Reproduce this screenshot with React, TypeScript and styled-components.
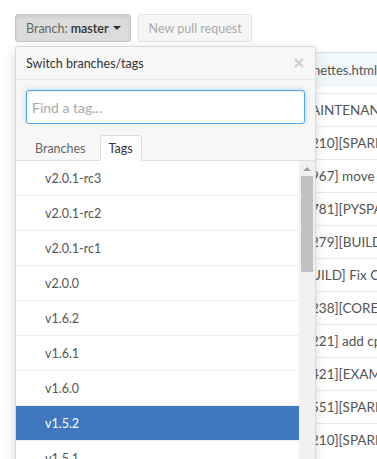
import React from "react";
import styled, { createGlobalStyle } from "styled-components";

const GlobalStyle = createGlobalStyle`
  html, body {
    margin: 0;
    overflow: hidden;
    background: #fff;
  }
  body {
    font-family: Lato, "Open Sans", sans-serif;
    color: #333;
  }
`;

const tags = [
  "v2.0.1-rc3",
  "v2.0.1-rc2",
  "v2.0.1-rc1",
  "v2.0.0",
  "v1.6.2",
  "v1.6.1",
  "v1.6.0",
  "v1.5.2",
  "v1.5.1",
  "v1.5.0",
];

const commits = [
  "AINTENAN",
  "210][SPARK",
  "967] move",
  "781][PYSPA",
  "279][BUILD",
  "UILD] Fix C",
  "238][CORE]",
  "221] add cp",
  "421][EXAM",
  "551][SPARK",
  "210][SPARK",
];

const Page = styled.div`
  position: relative;
  height: 459px;
  padding: 14px 15px 0;
  box-sizing: border-box;
  overflow: hidden;
`;

const Toolbar = styled.div`
  display: flex;
  gap: 7px;
`;

const Button = styled.button<{ $pressed?: boolean }>`
  height: 28px;
  padding: 0 9px 0 10px;
  border-radius: 3px;
  font-family: inherit;
  font-size: 12.5px;
  display: flex;
  align-items: center;
  gap: 3px;
  border: 1px solid ${({ $pressed }) => ($pressed ? "#c5c5c5" : "#e3e3e3")};
  background: ${({ $pressed }) => ($pressed ? "#dcdcdc" : "#f6f6f6")};
  color: ${({ $pressed }) => ($pressed ? "#666" : "#aaa")};
  box-shadow: ${({ $pressed }) =>
    $pressed ? "inset 0 2px 4px rgba(0,0,0,0.08)" : "none"};
`;

const Strong = styled.span`
  color: #333;
  font-weight: 600;
`;

const Caret = styled.span`
  display: inline-block;
  width: 0;
  height: 0;
  margin-left: 1px;
  border-top: 4px solid #333;
  border-left: 4px solid transparent;
  border-right: 4px solid transparent;
`;

const Commits = styled.div`
  margin-top: 10px;
  margin-left: 280px;
  margin-right: -15px;
`;

const Tease = styled.div`
  height: 34px;
  background: #f2f9fc;
  border-top: 1px solid #c9e6f2;
  display: flex;
  align-items: center;
  padding-left: 18px;
  font-size: 13px;
  color: #555;
  margin-bottom: 6px;
`;

const CommitRow = styled.div`
  height: 32px;
  border-top: 1px solid #eaeaea;
  display: flex;
  align-items: center;
  padding-left: 16px;
  font-size: 13.5px;
  color: #555;
  white-space: nowrap;
`;

const Menu = styled.div`
  position: absolute;
  left: 15px;
  top: 46px;
  width: 299px;
  height: 440px;
  background: #fff;
  border: 1px solid rgba(0, 0, 0, 0.15);
  border-radius: 3px;
  box-shadow: 0 3px 12px rgba(0, 0, 0, 0.15);
  display: flex;
  flex-direction: column;
  overflow: hidden;
`;

const MenuHeader = styled.div`
  height: 32px;
  flex: none;
  display: flex;
  align-items: center;
  justify-content: space-between;
  padding: 0 10px;
  background: #f7f7f7;
  border-bottom: 1px solid #e5e5e5;
  font-size: 12.5px;
  color: #333;
`;

const Close = styled.svg`
  width: 10px;
  height: 10px;
  margin-right: 1px;
`;

const FilterBox = styled.div`
  padding: 10px 10px 0;
  background: #f7f7f7;
  flex: none;
`;

const Input = styled.input`
  display: block;
  width: 100%;
  height: 34px;
  box-sizing: border-box;
  padding: 0 5px;
  border: 1px solid #51a7e8;
  border-radius: 3px;
  font-family: inherit;
  font-size: 14px;
  color: #333;
  outline: none;
  box-shadow: inset 0 1px 2px rgba(0, 0, 0, 0.075),
    0 0 4px rgba(81, 167, 232, 0.5);
  &::placeholder {
    color: #aaa;
  }
`;

const Tabs = styled.div`
  display: flex;
  gap: 5px;
  padding: 11px 10px 0;
  background: #f7f7f7;
  border-bottom: 1px solid #ddd;
  flex: none;
`;

const Tab = styled.div<{ $active?: boolean }>`
  height: 24px;
  padding: 0 8px;
  display: flex;
  align-items: center;
  font-size: 12.5px;
  margin-bottom: -1px;
  border: 1px solid ${({ $active }) => ($active ? "#ddd" : "transparent")};
  border-bottom: 1px solid ${({ $active }) => ($active ? "#fff" : "transparent")};
  border-radius: 3px 3px 0 0;
  background: ${({ $active }) => ($active ? "#fff" : "transparent")};
  color: ${({ $active }) => ($active ? "#333" : "#666")};
`;

const ListArea = styled.div`
  flex: 1;
  display: flex;
  min-height: 0;
`;

const List = styled.div`
  flex: 1;
  overflow: hidden;
`;

const Item = styled.div<{ $selected?: boolean }>`
  height: 34px;
  border-bottom: 1px solid #eee;
  display: flex;
  align-items: center;
  padding-left: 29px;
  font-size: 12.5px;
  color: ${({ $selected }) => ($selected ? "#fff" : "#555")};
  background: ${({ $selected }) => ($selected ? "#4078c0" : "#fff")};
`;

const Scrollbar = styled.div`
  width: 16px;
  flex: none;
  background: #f1f1f1;
  display: flex;
  flex-direction: column;
  align-items: center;
  padding-top: 6px;
  gap: 5px;
`;

const Arrow = styled.span`
  width: 0;
  height: 0;
  border-bottom: 4px solid #a3a3a3;
  border-left: 4px solid transparent;
  border-right: 4px solid transparent;
`;

const Thumb = styled.div`
  width: 12px;
  height: 96px;
  background: #c1c1c1;
`;

export default function App() {
  return (
    <>
      <GlobalStyle />
      <Page>
        <Toolbar>
          <Button $pressed>
            Branch: <Strong>master</Strong>
            <Caret />
          </Button>
          <Button disabled>New pull request</Button>
        </Toolbar>

        <Commits>
          <Tease>nettes.html</Tease>
          {commits.map((c, i) => (
            <CommitRow key={i}>{c}</CommitRow>
          ))}
        </Commits>

        <Menu>
          <MenuHeader>
            Switch branches/tags
            <Close viewBox="0 0 10 10">
              <path d="M1 1 L9 9 M9 1 L1 9" stroke="#ccc" strokeWidth="2" />
            </Close>
          </MenuHeader>
          <FilterBox>
            <Input placeholder="Find a tag..." autoFocus />
          </FilterBox>
          <Tabs>
            <Tab>Branches</Tab>
            <Tab $active>Tags</Tab>
          </Tabs>
          <ListArea>
            <List>
              {tags.map((t) => (
                <Item key={t} $selected={t === "v1.5.2"}>
                  {t}
                </Item>
              ))}
            </List>
            <Scrollbar>
              <Arrow />
              <Thumb />
            </Scrollbar>
          </ListArea>
        </Menu>
      </Page>
    </>
  );
}
